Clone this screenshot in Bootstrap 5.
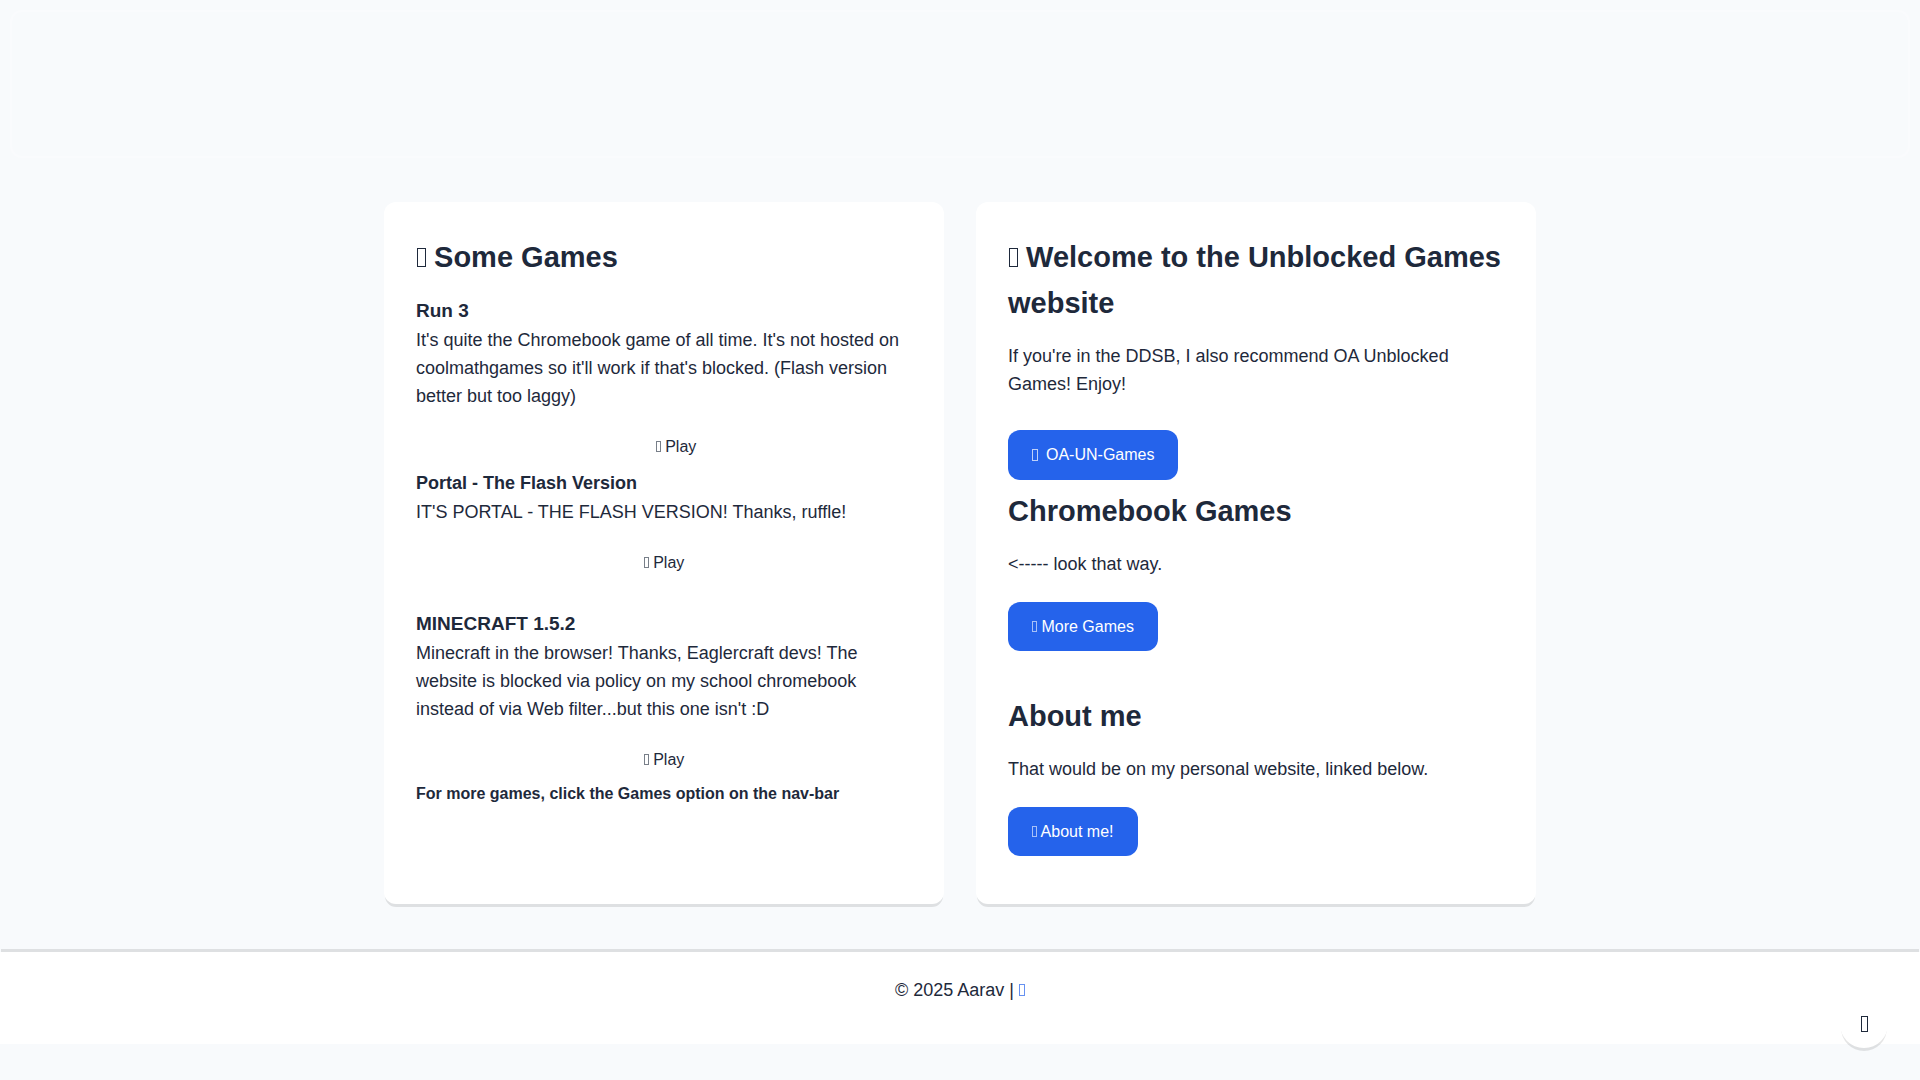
<!DOCTYPE html>
<html lang="en">
<head>
<meta charset="utf-8">
<meta name="viewport" content="width=device-width, initial-scale=1">
<title>Unblocked Games</title>
<link href="https://cdn.jsdelivr.net/npm/bootstrap@5.3.0/dist/css/bootstrap.min.css" rel="stylesheet">
<style>
  body { background: #f8fafc; color: #1e293b; font-family: "Liberation Sans", Arial, sans-serif; font-size: 16px; line-height: 26px; }
  .site-nav { height: 148px; margin: 10px 10px 44px; border: 2px solid #fafbfd; border-radius: 12px; }
  .site-main { max-width: 1152px; }
  .panels { display: grid; gap: 32px; }
  @media (min-width: 768px) { .panels { grid-template-columns: 1fr 1fr; } }
  .panel { background: #fff; border-radius: 12px; padding: 32px; box-shadow: 0 4px 0 -1px rgba(0,0,0,.1); }
  h2 { font-size: 29px; line-height: 46px; font-weight: 700; margin-bottom: 16px; }
  h3 { font-size: 19px; line-height: 30px; font-weight: 700; margin: 0; }
  h3.long-name { font-size: 18px; }
  h4 { font-size: 16px; line-height: 26px; font-weight: 700; margin: 0; }
  p { font-size: 18px; line-height: 28px; }
  .game p { margin-bottom: 15px; }
  .game-gap { margin-bottom: 25px; }
  .ico { display: inline-block; width: 5px; height: 11px; border: 1px solid currentColor; opacity: .6; }
  .ico-md { width: 6px; height: 12px; opacity: .7; }
  .ico-lg { width: 7px; height: 16px; opacity: 1; }
  .ico-xl { width: 9px; height: 19px; margin-left: 1px; opacity: 1; }
  .play-btn { color: inherit; font-size: 16px; line-height: 26px; padding: 9px 24px 8px; border: 0; }
  .action-btn { --bs-btn-bg: #2563eb; --bs-btn-color: #fff; font-size: 16px; line-height: 25px; padding: 12px 24px; border: 0; border-radius: 12px; }
  .action-tall { line-height: 26px; gap: 8px; }
  .after-action { margin-top: 42px; }
  .site-footer { background: #fff; box-shadow: 0 -4px 0 -1px rgba(0,0,0,.1); margin-top: 48px; }
  .site-footer a { color: #2563eb; }
  .theme-btn { width: 48px; height: 48px; right: 32px; bottom: 32px; border: 0; border-radius: 50%; background: #fff; color: #1e293b; box-shadow: 0 4px 0 -1px rgba(0,0,0,.1); }
</style>
</head>
<body>
<header class="site-nav"></header>
<main class="site-main mx-auto">
  <div class="panels">
    <section class="panel">
      <h2><i class="ico ico-xl"></i> Some Games</h2>
      <div class="game">
        <h3>Run 3</h3>
        <p>It's quite the Chromebook game of all time. It's not hosted on coolmathgames so it'll work if that's blocked. (Flash version better but too laggy)</p>
        <div class="d-flex justify-content-center ps-4"><button type="button" class="btn play-btn"><i class="ico"></i> Play</button></div>
      </div>
      <div class="game game-gap">
        <h3 class="long-name">Portal - The Flash Version</h3>
        <p>IT'S PORTAL - THE FLASH VERSION! Thanks, ruffle!</p>
        <div class="d-flex justify-content-center"><button type="button" class="btn play-btn"><i class="ico"></i> Play</button></div>
      </div>
      <div class="game">
        <h3>MINECRAFT 1.5.2</h3>
        <p>Minecraft in the browser! Thanks, Eaglercraft devs! The website is blocked via policy on my school chromebook instead of via Web filter...but this one isn't :D</p>
        <div class="d-flex justify-content-center"><button type="button" class="btn play-btn"><i class="ico"></i> Play</button></div>
      </div>
      <h4>For more games, click the Games option on the nav-bar</h4>
    </section>
    <section class="panel">
      <h2><i class="ico ico-xl"></i> Welcome to the Unblocked Games website</h2>
      <p class="mb-0 pb-2">If you're in the DDSB, I also recommend OA Unblocked Games! Enjoy!</p>
      <a href="#" class="btn action-btn action-tall d-inline-flex align-items-center mt-4"><i class="ico ico-md"></i>OA-UN-Games</a>
      <h2 class="mt-2">Chromebook Games</h2>
      <p class="mb-4">&lt;----- look that way.</p>
      <a href="#" class="btn action-btn d-table"><i class="ico"></i> More Games</a>
      <h2 class="after-action">About me</h2>
      <p class="mb-4">That would be on my personal website, linked below.</p>
      <a href="#" class="btn action-btn d-table mb-3"><i class="ico"></i> About me!</a>
    </section>
  </div>
</main>
<footer class="site-footer text-center py-4">
  <p class="mb-3">© 2025 Aarav | <a href="#" class="text-decoration-none" aria-label="GitHub"><i class="ico ico-md"></i></a></p>
</footer>
<button type="button" class="theme-btn position-fixed p-0 d-flex align-items-center justify-content-center" aria-label="Toggle theme"><i class="ico ico-lg"></i></button>
<script src="https://cdn.jsdelivr.net/npm/bootstrap@5.3.0/dist/js/bootstrap.bundle.min.js"></script>
</body>
</html>
